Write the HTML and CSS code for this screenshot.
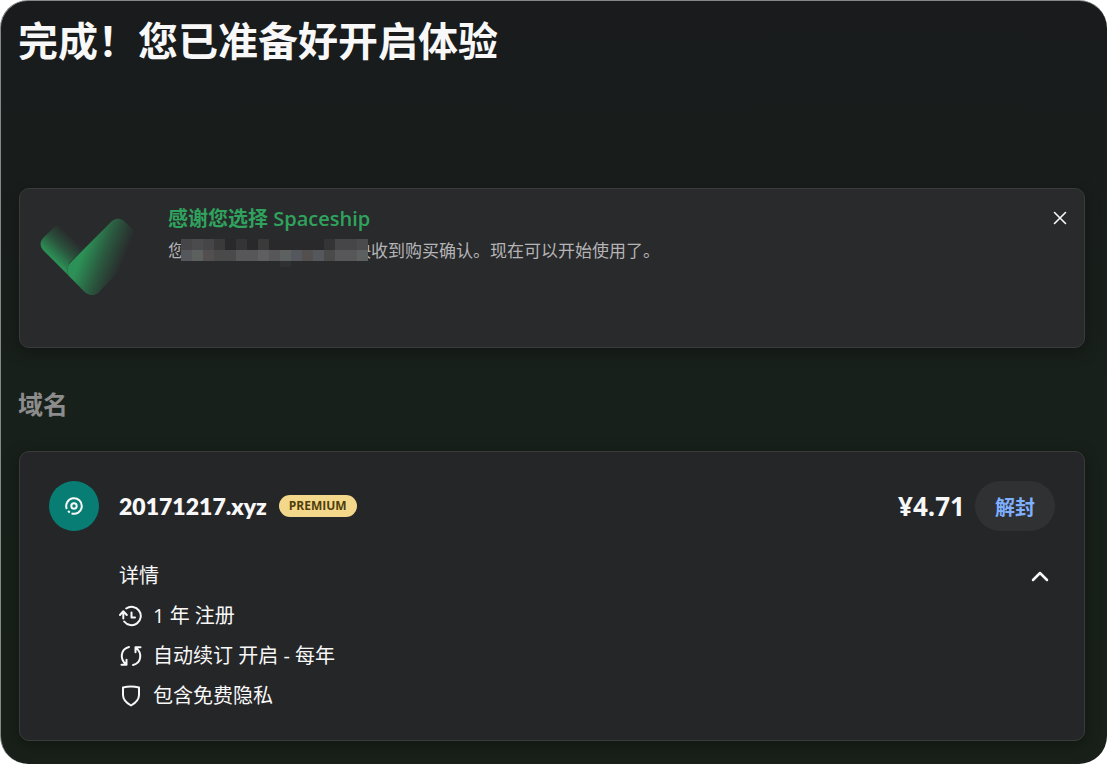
FILE: index.html
```html
<!DOCTYPE html>
<html lang="zh-CN">
  <head>
    <meta charset="UTF-8" />
    <meta name="viewport" content="width=device-width, initial-scale=1.0" />
    <title>Spaceship</title>
    <link rel="stylesheet" href="styles.css">
  </head>
  <body>
    <main class="page">
      <h1>完成！您已准备好开启体验</h1>

      <section class="card notice">
        <svg class="check" viewBox="0 0 106 80" aria-hidden="true">
          <defs>
            <linearGradient id="short" gradientUnits="userSpaceOnUse" x1="12" y1="41" x2="32" y2="20">
              <stop offset="0" stop-color="#2c9156" />
              <stop offset="0.5" stop-color="#2c9156" stop-opacity="0.4" />
              <stop offset="1" stop-color="#2c9156" stop-opacity="0" />
            </linearGradient>
            <linearGradient id="long" gradientUnits="userSpaceOnUse" x1="42" y1="38" x2="80" y2="53">
              <stop offset="0" stop-color="#2c9156" />
              <stop offset="0.5" stop-color="#2c9156" stop-opacity="0.45" />
              <stop offset="1" stop-color="#2c9156" stop-opacity="0" />
            </linearGradient>
          </defs>
          <path d="M25 0L3 21Q-2 27 3 33L45 75Q52 81 59 75L29 46L56 20Z" fill="url(#short)" />
          <path d="M72 4Q78 -1 84 4L106 26L59 75Q52 81 45 75L29 59Q25 52 30 46Z" fill="#292a2c" />
          <path d="M72 4Q78 -1 84 4L106 26L59 75Q52 81 45 75L29 59Q25 52 30 46Z" fill="url(#long)" />
        </svg>
        <div class="notice-text">
          <h3>感谢您选择 Spaceship</h3>
          <p>您<span class="redacted"><svg viewBox="0 0 187 28" shape-rendering="crispEdges" aria-hidden="true">
            <path fill="#29292b" d="M0 0h187v22H0z" />
            <path fill="#464649" d="M0 0h11v11H0zM22 0h11v11H22zM154 0h22v11h-22z" />
            <path fill="#4b4b4e" d="M11 0h11v11H11zM176 0h11v11h-11z" />
            <path fill="#3b3a3a" d="M33 0h11v11H33zM77 0h11v11H77z" />
            <path fill="#343437" d="M55 0h11v11H55zM143 0h11v11h-11z" />
            <path fill="#2f3032" d="M99 22h11v6H99z" />
            <path fill="#54575b" d="M0 11h11v11H0zM110 11h11v11h-11zM132 11h11v11h-11z" />
            <path fill="#5c605f" d="M11 11h11v11H11zM99 11h11v11H99zM176 11h11v11h-11z" />
            <path fill="#534f4f" d="M22 11h11v11H22zM121 11h11v11h-11z" />
            <path fill="#4b4a4a" d="M33 11h22v11H33zM143 11h11v11h-11z" />
            <path fill="#575659" d="M55 11h22v11H55zM88 11h11v11H88zM154 11h22v11h-22z" />
            <path fill="#5f5e60" d="M77 11h11v11H77z" />
          </svg></span>快收到购买确认。现在可以开始使用了。</p>
        </div>
        <button class="close" aria-label="关闭">
          <svg viewBox="0 0 14 14"><path d="M1.5 1.5L12.5 12.5M12.5 1.5L1.5 12.5" /></svg>
        </button>
      </section>

      <h2>域名</h2>

      <section class="card order">
        <div class="order-head">
          <div class="logo">
            <svg viewBox="0 0 20 20" aria-hidden="true">
              <circle cx="10" cy="10" r="2.7" />
              <path d="M2.8 13A7.8 7.8 0 1 1 7.5 17.4" />
              <path d="M4 15L5.8 16.6" />
            </svg>
          </div>
          <span class="domain">20171217.xyz</span>
          <span class="badge">PREMIUM</span>
          <span class="price">¥4.71</span>
          <button class="unbox">解封</button>
        </div>

        <div class="details">
          <div class="details-head">
            <span>详情</span>
            <button class="toggle" aria-label="收起详情">
              <svg viewBox="0 0 18 12"><path d="M2 10L9 3L16 10" /></svg>
            </button>
          </div>
          <ul>
            <li>
              <svg viewBox="0 0 24 24" aria-hidden="true">
                <path d="M7.2 4.5A9.2 9.2 0 1 1 5.2 17.5M4.3 14.5V7.5M1 11L4.3 7.2L7.8 11M12.5 8.5V13.5H16" />
              </svg>
              1 年 注册
            </li>
            <li>
              <svg viewBox="0 0 24 24" aria-hidden="true">
                <path d="M10 3C1.5 5 0.5 15 7 20.3M2.5 20.7H7.5V15.7M14 21C22.5 19 23.5 9 17 3.7M21.5 3.3H16.5V8.3" />
              </svg>
              自动续订 开启 - 每年
            </li>
            <li>
              <svg viewBox="0 0 24 24" aria-hidden="true">
                <path d="M4 3.5Q12 1.5 20 3.5V11C20 16 16.5 19 12 21.5C7.5 19 4 16 4 11Z" />
              </svg>
              包含免费隐私
            </li>
          </ul>
        </div>
      </section>
    </main>
  </body>
</html>
```
FILE: styles.css
```css
* {
  box-sizing: border-box;
}
body {
  margin: 0;
  background: #fff;
  color: #f8f8f8;
  font-family: "Open Sans", "Noto Sans CJK SC", sans-serif;
}
h1,
h2,
h3,
p,
ul {
  margin: 0;
  padding: 0;
}
button {
  border: none;
  padding: 0;
  background: none;
  color: inherit;
  font-family: inherit;
  cursor: pointer;
}
svg {
  display: block;
  fill: none;
  stroke-linecap: round;
  stroke-linejoin: round;
}
.page {
  min-height: 100vh;
  padding: 10px 22px 23px 17px;
  border-top: 1px solid #858888;
  border-left: 1px solid #858888;
  border-radius: 28px;
  background: linear-gradient(#191b1c, #18201b 50%, #182019);
}
h1 {
  font-size: 40px;
  line-height: 60px;
  font-weight: 700;
}
h2 {
  margin: 36px 0 26px;
  font-size: 25px;
  line-height: 41px;
  color: #8c8c8c;
}
.card {
  margin-left: 1px;
  border: 1px solid #3a3b3b;
  border-radius: 10px;
  box-shadow: 0 4px 16px rgba(0, 0, 0, 0.3);
}
.notice {
  display: flex;
  align-items: flex-start;
  min-height: 160px;
  margin-top: 117px;
  padding: 14px 17px 14px 20px;
  background: #292a2c;
}
.check {
  width: 106px;
  height: 80px;
  margin-top: 14px;
}
.notice-text {
  flex: 1;
  margin-left: 22px;
}
h3 {
  font-size: 20px;
  line-height: 32px;
  font-weight: 600;
  color: #2fa35d;
}
.notice-text p {
  font-size: 17px;
  line-height: 32px;
  color: #b4b4b6;
}
.redacted {
  display: inline-block;
  position: relative;
  width: 169px;
  height: 22px;
  vertical-align: middle;
}
.redacted svg {
  position: absolute;
  top: -2px;
  left: -4px;
  width: 187px;
  height: 28px;
}
.close {
  margin-top: 8px;
}
.close svg {
  width: 14px;
  height: 14px;
  stroke: #f8f8f8;
  stroke-width: 1.6;
}
.order {
  padding: 29px;
  background: #252628;
}
.order-head {
  display: flex;
  align-items: center;
}
.logo {
  display: flex;
  align-items: center;
  justify-content: center;
  width: 50px;
  height: 50px;
  margin-right: 20px;
  border-radius: 50%;
  background: #077d74;
}
.logo svg {
  width: 20px;
  height: 20px;
  stroke: #f8f8f8;
  stroke-width: 2;
  stroke-linecap: butt;
}
.domain {
  font-family: Lato, sans-serif;
  font-size: 23px;
  font-weight: 800;
}
.badge {
  margin-left: 12px;
  padding: 0 10px;
  border-radius: 11px;
  background: #f3d88b;
  color: #503e0c;
  font-size: 12px;
  line-height: 22px;
  font-weight: 700;
}
.price {
  margin-left: auto;
  font-size: 26px;
  font-weight: 700;
}
.unbox {
  width: 80px;
  height: 50px;
  margin-left: 10px;
  border-radius: 25px;
  background: #303133;
  color: #7fb0ff;
  font-size: 20px;
  font-weight: 700;
}
.details {
  margin: 25px 0 -5px 70px;
  font-size: 20px;
  line-height: 40px;
}
.details-head {
  display: flex;
  align-items: center;
  justify-content: space-between;
}
.toggle {
  margin-right: 6px;
}
.toggle svg {
  width: 18px;
  height: 12px;
  stroke: #f8f8f8;
  stroke-width: 2.5;
}
.details li {
  display: flex;
  align-items: center;
  gap: 10px;
}
.details li svg {
  width: 24px;
  height: 24px;
  stroke: #f8f8f8;
  stroke-width: 2;
}
```
